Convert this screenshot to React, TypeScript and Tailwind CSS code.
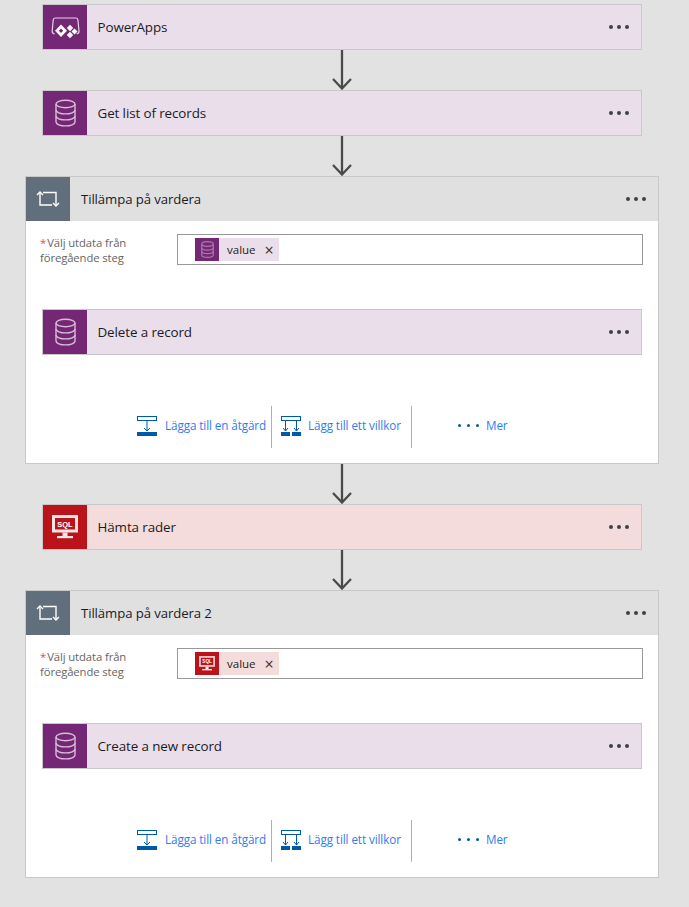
const font = "font-['Open_Sans','Noto_Sans',sans-serif]";

function Dots() {
  return (
    <div className="flex gap-[4px] items-center">
      <span className="w-[4px] h-[4px] rounded-full bg-[#3c4248]" />
      <span className="w-[4px] h-[4px] rounded-full bg-[#3c4248]" />
      <span className="w-[4px] h-[4px] rounded-full bg-[#3c4248]" />
    </div>
  );
}

function Db({ small = false }: { small?: boolean }) {
  return (
    <svg
      width={small ? 13 : 21}
      height={small ? 17 : 28}
      viewBox="0 0 21 28"
      fill="none"
      stroke={small ? "#a878a8" : "#d8bcd8"}
      strokeWidth={small ? 2 : 1.4}
    >
      <ellipse cx="10.5" cy="5" rx="9.5" ry="3.8" />
      <path d="M1 5v18c0 2.2 4.3 3.9 9.5 3.9s9.5-1.7 9.5-3.9V5" />
      <path d="M1 11c0 2.2 4.3 3.9 9.5 3.9s9.5-1.7 9.5-3.9" />
      <path d="M1 17c0 2.2 4.3 3.9 9.5 3.9s9.5-1.7 9.5-3.9" />
    </svg>
  );
}

function PowerApps() {
  return (
    <svg width="30" height="24" viewBox="0 0 30 24" fill="none">
      <path d="M4.5 19C3 18.5 2 17.5 2.2 16L3.2 5C3.3 3.8 4 3 5.2 3H26C27.2 3 27.8 3.8 27.9 5L29 16C29.2 17.5 28.2 18.5 26.7 19" stroke="#e4d5e6" strokeWidth="1.2" />
      <path d="M11 9.5L17 15.7L11 22L5 15.7Z M11 13.5L8.8 15.7L11 18L13.2 15.7Z" fill="#fff" fillRule="evenodd" />
      <path d="M20 9.7L23.2 13L20 16.3L16.8 13Z" fill="#fff" />
      <path d="M20 16.7L23.2 20L20 23.3L16.8 20Z" fill="#fff" />
      <path d="M24.5 13.4L27.5 16.5L24.5 19.6L21.5 16.5Z" fill="#fff" />
    </svg>
  );
}

function Sql({ small = false }: { small?: boolean }) {
  const s = small ? 0.62 : 1;
  return (
    <svg width={26 * s} height={24 * s} viewBox="0 0 26 24">
      <rect x="0" y="0" width="26" height="17.5" fill={small ? "#ecc4c6" : "#f6e4e4"} />
      <rect x="3" y="3" width="20" height="11.5" fill="#ba141a" />
      <text x="13" y="11.8" textAnchor="middle" fontSize="7.5" fontWeight="700" fill="#fff" fontFamily="Liberation Sans, sans-serif">SQL</text>
      <rect x="10.5" y="17.5" width="5" height="3.5" fill="#f6e4e4" />
      <rect x="5" y="21" width="16" height="2.2" fill="#f6e4e4" />
    </svg>
  );
}

function Loop() {
  return (
    <svg width="24" height="18" viewBox="0 0 24 18" fill="none" stroke="#fff" strokeWidth="1.4">
      <path d="M4 2V15H16" />
      <path d="M1 5L4 2L7 5" />
      <path d="M7 2.5H20V16" />
      <path d="M17 13L20 16L23 13" />
    </svg>
  );
}

function Arrow() {
  return (
    <div className="h-[40px] flex justify-center w-[684px]">
      <svg width="20" height="40" viewBox="0 0 20 40" fill="none" stroke="#4a4a4a" strokeWidth="2.3">
        <path d="M10 0V38" />
        <path d="M1 29L10 38.5L19 29" />
      </svg>
    </div>
  );
}

function Card({ title, icon, kind = "purple" }: { title: string; icon: React.ReactNode; kind?: "purple" | "red" }) {
  return (
    <div className={`w-[600px] h-[46px] border border-[#c8c8c8] flex items-center ${kind === "purple" ? "bg-[#eadeea]" : "bg-[#f4dcdc]"}`}>
      <div className={`w-[44px] h-full flex items-center justify-center shrink-0 ${kind === "purple" ? "bg-[#742774]" : "bg-[#ba141a]"}`}>
        {icon}
      </div>
      <span className="ml-[10.5px] text-[13.4px] text-[#1b1b24] tracking-[-0.1px]">{title}</span>
      <div className="ml-auto mr-[12px]">
        <Dots />
      </div>
    </div>
  );
}

function AddOne() {
  return (
    <svg width="20" height="20" viewBox="0 0 20 20" fill="none" className="shrink-0">
      <rect x="0.5" y="0.5" width="19" height="4" stroke="#0058a8" />
      <path d="M10 5V15" stroke="#0058a8" />
      <path d="M7 12L10 15L13 12" stroke="#0058a8" />
      <rect x="0" y="16" width="20" height="4" fill="#0058a8" />
    </svg>
  );
}

function AddTwo() {
  return (
    <svg width="20" height="20" viewBox="0 0 20 20" fill="none" className="shrink-0">
      <rect x="0.5" y="0.5" width="19" height="4" stroke="#0058a8" />
      <path d="M4.5 5V15M15.5 5V15" stroke="#0058a8" />
      <path d="M2 12L4.5 15L7 12M13 12L15.5 15L18 12" stroke="#0058a8" />
      <rect x="0" y="16" width="9" height="4" fill="#0058a8" />
      <rect x="11" y="16" width="9" height="4" fill="#0058a8" />
    </svg>
  );
}

function LoopBlock({ title, chipKind, cardTitle }: { title: string; chipKind: "purple" | "red"; cardTitle: string }) {
  return (
    <div className="w-[634px] h-[288px] border border-[#c8c8c8] bg-white flex flex-col">
      <div className="h-[44px] bg-[#e0e0e0] flex items-center shrink-0">
        <div className="w-[44px] h-full bg-[#616f7d] flex items-center justify-center shrink-0">
          <Loop />
        </div>
        <span className="ml-[11px] pt-[1px] text-[13.2px] text-[#1b1b24] tracking-[-0.1px]">{title}</span>
        <div className="ml-auto mr-[12px]">
          <Dots />
        </div>
      </div>
      <div className="flex mt-[13px] pl-[14px]">
        <div className="w-[137px] text-[11.3px] leading-[15px] text-[#666] pt-[1px] tracking-[-0.1px]">
          <span className="text-[#e05050]">*</span><span className="ml-[1px]">Välj utdata från</span><br />föregående steg
        </div>
        <div className="w-[466px] h-[31px] border border-[#999] flex items-center pl-[17px]">
          <div className={`h-[23px] w-[84px] flex items-center ${chipKind === "purple" ? "bg-[#eadeea]" : "bg-[#f4dcdc]"}`}>
            <div className={`w-[24px] h-full flex items-center justify-center shrink-0 ${chipKind === "purple" ? "bg-[#742774]" : "bg-[#ba141a]"}`}>
              {chipKind === "purple" ? <Db small /> : <Sql small />}
            </div>
            <span className="ml-[8px] text-[11.5px] text-[#222]">value</span>
            <span className="ml-[9px] text-[16px] leading-none text-[#333]">×</span>
          </div>
        </div>
      </div>
      <div className="mt-[44px] pl-[16px]">
        <Card title={cardTitle} icon={<Db />} />
      </div>
      <div className="mt-[51px] flex h-[42px] items-center pl-[111px] text-[11.7px] text-[#2f7cf0] tracking-[-0.1px]">
        <div className="flex items-center w-[134px] mb-[2px]">
          <AddOne />
          <span className="ml-[8px] whitespace-nowrap">Lägga till en åtgärd</span>
        </div>
        <div className="w-px h-full bg-[#9fb0e0]" />
        <div className="flex items-center w-[139px] pl-[9px] mb-[2px]">
          <AddTwo />
          <span className="ml-[7px] whitespace-nowrap">Lägg till ett villkor</span>
        </div>
        <div className="w-px h-full bg-[#9fb0e0]" />
        <div className="flex items-center pl-[46px] mb-[2px]">
          <div className="flex gap-[6px]">
            <span className="w-[3px] h-[3px] rounded-full bg-[#0058a8]" />
            <span className="w-[3px] h-[3px] rounded-full bg-[#0058a8]" />
            <span className="w-[3px] h-[3px] rounded-full bg-[#0058a8]" />
          </div>
          <span className="ml-[7px]">Mer</span>
        </div>
      </div>
    </div>
  );
}

export default function App() {
  return (
    <div className={`${font} w-[689px] h-[907px] bg-[#e2e2e2] overflow-hidden pt-[4px] flex flex-col`}>
      <div className="pl-[42px]"><Card title="PowerApps" icon={<PowerApps />} /></div>
      <Arrow />
      <div className="pl-[42px]"><Card title="Get list of records" icon={<Db />} /></div>
      <Arrow />
      <div className="pl-[25px]"><LoopBlock title="Tillämpa på vardera" chipKind="purple" cardTitle="Delete a record" /></div>
      <Arrow />
      <div className="pl-[42px]"><Card title="Hämta rader" icon={<Sql />} kind="red" /></div>
      <Arrow />
      <div className="pl-[25px]"><LoopBlock title="Tillämpa på vardera 2" chipKind="red" cardTitle="Create a new record" /></div>
    </div>
  );
}
